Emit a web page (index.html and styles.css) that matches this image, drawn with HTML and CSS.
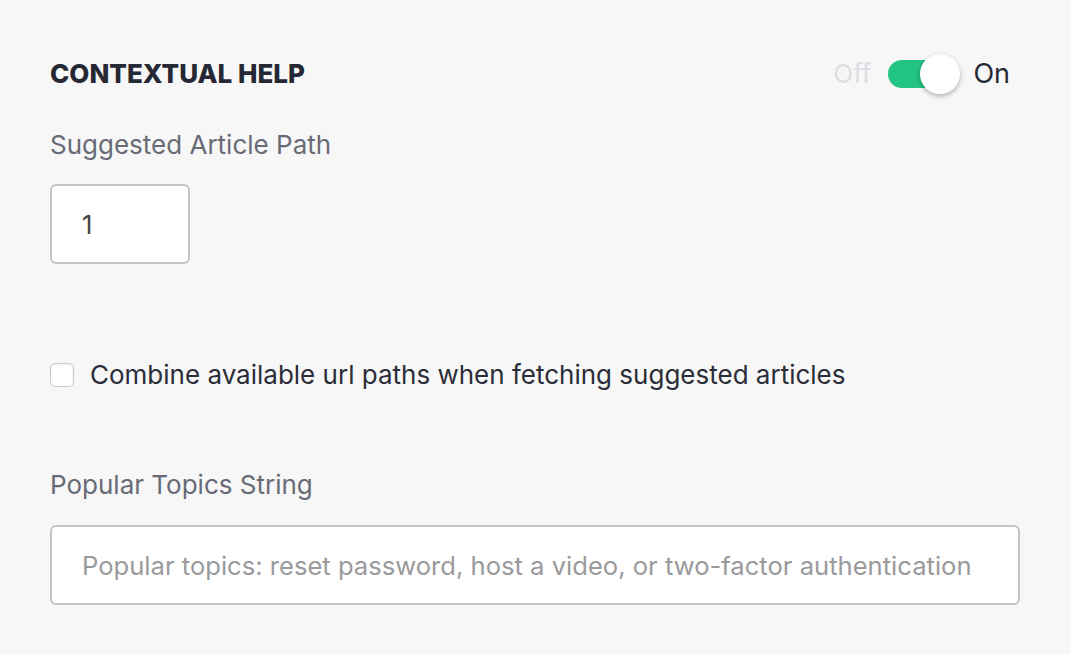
FILE: index.html
```html
<!DOCTYPE html>
<html lang="en">
<head>
    <meta charset="UTF-8">
    <meta name="viewport" content="width=device-width, initial-scale=1.0">
    <title>Contextual Help</title>
    <link rel="stylesheet" href="styles.css">
</head>
<body>
    <div class="panel">
        <!-- Header with toggle -->
        <div class="panel-header">
            <h2>CONTEXTUAL HELP</h2>
            <div class="toggle">
                <span class="toggle-label off">Off</span>
                <span class="switch"><span class="knob"></span></span>
                <span class="toggle-label on">On</span>
            </div>
        </div>

        <div class="field">
            <label for="article-path">Suggested Article Path</label>
            <input type="text" id="article-path" class="input-small" value="1">
        </div>

        <label class="check-row">
            <span class="checkbox"></span>
            <span class="check-text">Combine available url paths when fetching suggested articles</span>
        </label>

        <div class="field topics">
            <label for="topics">Popular Topics String</label>
            <input type="text" id="topics" class="input-wide" placeholder="Popular topics: reset password, host a video, or two-factor authentication">
        </div>
    </div>
</body>
</html>
```

FILE: styles.css
```css
/* Basic styling */
body {
    font-family: 'Inter', 'Open Sans', sans-serif;
    margin: 0;
    padding: 0;
    background-color: #f7f7f7;
    color: #2b2d38;
}
.panel {
    padding: 54px 50px 0 50px;
}

/* Header */
.panel-header {
    display: flex;
    justify-content: space-between;
    align-items: center;
    height: 40px;
    padding-right: 10px;
}
.panel-header h2 {
    margin: 0;
    font-size: 26px;
    line-height: 32px;
    font-weight: 800;
    color: #262833;
}
.toggle {
    display: flex;
    align-items: center;
}
.toggle-label {
    font-size: 26px;
    line-height: 32px;
}
.toggle-label.off {
    color: #dcdee4;
    margin-right: 17px;
}
.toggle-label.on {
    color: #262833;
    margin-left: 21px;
    font-size: 27px;
}
.switch {
    position: relative;
    width: 64px;
    height: 28px;
    border-radius: 14px;
    background-color: #22c483;
}
.switch .knob {
    position: absolute;
    right: -8px;
    top: -6px;
    width: 40px;
    height: 40px;
    border-radius: 50%;
    background-color: white;
    box-shadow: 0 2px 5px rgba(0, 0, 0, 0.3);
}

/* Form fields */
.field {
    margin-top: 35px;
}
.field label {
    display: block;
    font-size: 26px;
    line-height: 32px;
    color: #686b75;
    margin-bottom: 23px;
}
input {
    display: block;
    font-family: inherit;
    font-size: 25.6px;
    border: 2px solid #c3c5cd;
    border-radius: 6px;
    background-color: white;
    box-sizing: border-box;
    height: 80px;
    padding: 0 30px;
    color: #444;
    outline: none;
}
.input-small {
    width: 140px;
}
.input-wide {
    width: 970px;
}
input::placeholder {
    color: #9a9a9c;
}

/* Checkbox row */
.check-row {
    display: flex;
    align-items: center;
    margin-top: 95px;
}
.checkbox {
    width: 22px;
    height: 22px;
    border: 1px solid #c9c9cc;
    border-radius: 5px;
    background-color: white;
    box-shadow: inset 0 1px 2px rgba(0, 0, 0, 0.08);
}
.check-text {
    font-size: 26px;
    line-height: 32px;
    color: #2b2d38;
    margin-left: 16px;
}
.field.topics {
    margin-top: 78px;
}
.field.topics label {
    margin-bottom: 24px;
}
```
